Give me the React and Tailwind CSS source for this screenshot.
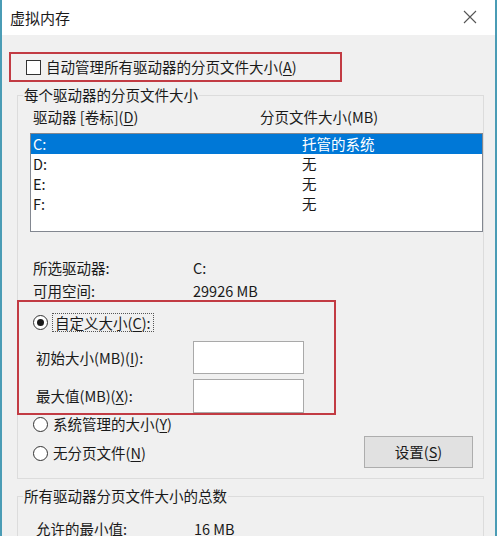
import React from "react";

const font = { fontFamily: '"Noto Sans CJK SC", "Noto Sans", sans-serif' };

const U = ({ children }) => <span className="underline underline-offset-2">{children}</span>;

const Radio = ({ checked }) => (
  <span className="w-[15px] h-[15px] rounded-full border border-[#333] bg-white flex items-center justify-center shrink-0">
    {checked && <span className="w-[7px] h-[7px] rounded-full bg-[#1a1a1a]" />}
  </span>
);

const drives = [
  { d: "C:", size: "托管的系统", sel: true },
  { d: "D:", size: "无" },
  { d: "E:", size: "无" },
  { d: "F:", size: "无" },
];

export default function App() {
  return (
    <div className="w-[500px] h-[536px] overflow-hidden bg-white flex text-[#1a1a1a] text-[14.5px] leading-[20px]" style={font}>
      <div className="w-[497px] h-full border-l-2 border-r-2 border-[#4a9cb5] flex flex-col shrink-0">
        {/* title bar */}
        <div className="h-[35px] bg-white flex items-center justify-between pl-[8px] pr-[18px] shrink-0">
          <span className="text-[15px]">虚拟内存</span>
          <svg width="14" height="14" viewBox="0 0 14 14" className="mb-[2px]">
            <path d="M1 1L13 13M13 1L1 13" stroke="#555" strokeWidth="1.1" fill="none" />
          </svg>
        </div>

        <div className="flex-1 bg-[#f0f0f0] flex flex-col">
          {/* auto manage */}
          <div className="mt-[17px] ml-[7px] w-[333px] h-[30px] border-2 border-[#c23b43] flex items-center pl-[15px] gap-[5px]">
            <span className="w-[15px] h-[15px] border border-[#333] bg-white shrink-0" />
            <span>自动管理所有驱动器的分页文件大小(<U>A</U>)</span>
          </div>

          {/* per-drive group */}
          <fieldset className="mt-[3px] ml-[15px] w-[467px] border border-[#dcdcdc] pb-[10px]">
            <legend className="ml-[5px] px-px leading-[20px]">每个驱动器的分页文件大小</legend>

            <div className="flex mt-[2px] pl-[15px] h-[20px]">
              <span className="w-[227px]">驱动器 [卷标](<U>D</U>)</span>
              <span>分页文件大小(MB)</span>
            </div>

            <div className="mt-[6px] ml-[12px] w-[453px] h-[99px] border border-[#828790] bg-white flex flex-col">
              {drives.map((r) => (
                <div key={r.d} className={`flex h-[20px] items-center ${r.sel ? "bg-[#0078d7] text-white" : ""}`}>
                  <span className="w-[271px] pl-[2px]">{r.d}</span>
                  <span>{r.size}</span>
                </div>
              ))}
            </div>

            <div className="mt-[26px] flex pl-[15px] h-[20px]">
              <span className="w-[160px]">所选驱动器:</span>
              <span>C:</span>
            </div>
            <div className="mt-[3px] flex pl-[15px] h-[20px]">
              <span className="w-[160px]">可用空间:</span>
              <span>29926 MB</span>
            </div>

            {/* custom size */}
            <div className="mt-[-1px] -ml-px w-[319px] h-[115px] border-2 border-[#c23b43] flex flex-col pl-[14px]">
              <div className="mt-[10px] flex items-center gap-[4px] h-[20px]">
                <Radio checked />
                <span className="border border-dotted border-[#555] px-[2px] leading-[17px]">自定义大小(<U>C</U>):</span>
              </div>
              <div className="mt-[9px] flex items-center h-[33px]">
                <span className="w-[160px] pl-[3px]">初始大小(MB)(<U>I</U>):</span>
                <span className="w-[111px] h-[33px] border border-[#a9a9a9] bg-white" />
              </div>
              <div className="mt-[5px] flex items-center h-[34px]">
                <span className="w-[160px] pl-[3px]">最大值(MB)(<U>X</U>):</span>
                <span className="w-[111px] h-[34px] border border-[#a9a9a9] bg-white" />
              </div>
            </div>

            <div className="flex justify-between pr-[10px]">
              <div className="flex flex-col pl-[15px]">
                <div className="flex items-center gap-[5px] h-[18px]">
                  <Radio />
                  <span>系统管理的大小(<U>Y</U>)</span>
                </div>
                <div className="mt-[11px] flex items-center gap-[5px] h-[18px]">
                  <Radio />
                  <span>无分页文件(<U>N</U>)</span>
                </div>
              </div>
              <button className="mt-[21px] w-[109px] h-[32px] bg-[#e1e1e1] border border-[#adadad] flex items-center justify-center">
                设置(<U>S</U>)
              </button>
            </div>
          </fieldset>

          {/* totals group */}
          <fieldset className="mt-[7px] ml-[15px] w-[467px] border border-[#dcdcdc] pb-[20px]">
            <legend className="ml-[5px] px-px leading-[20px]">所有驱动器分页文件大小的总数</legend>
            <div className="mt-[13px] flex pl-[18px] h-[20px]">
              <span className="w-[158px]">允许的最小值:</span>
              <span>16 MB</span>
            </div>
          </fieldset>
        </div>
      </div>
    </div>
  );
}
